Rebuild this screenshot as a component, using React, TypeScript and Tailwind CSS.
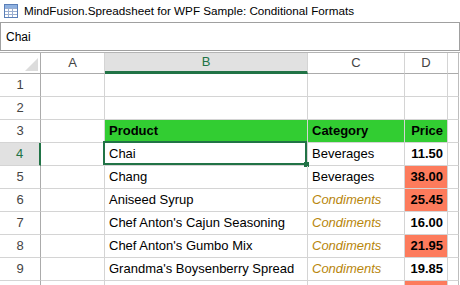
import React from 'react';

type Row = {
  n: number;
  product?: string;
  category?: string;
  price?: string;
  hot?: boolean;
  header?: boolean;
};

const ROWS: Row[] = [
  { n: 1 },
  { n: 2 },
  { n: 3, product: 'Product', category: 'Category', price: 'Price', header: true },
  { n: 4, product: 'Chai', category: 'Beverages', price: '11.50' },
  { n: 5, product: 'Chang', category: 'Beverages', price: '38.00', hot: true },
  { n: 6, product: 'Aniseed Syrup', category: 'Condiments', price: '25.45', hot: true },
  { n: 7, product: "Chef Anton's Cajun Seasoning", category: 'Condiments', price: '16.00' },
  { n: 8, product: "Chef Anton's Gumbo Mix", category: 'Condiments', price: '21.95', hot: true },
  { n: 9, product: "Grandma's Boysenberry Spread", category: 'Condiments', price: '19.85' },
  // row 10 is only a sliver at the bottom edge
  { n: 10, price: '', hot: true },
];

const cellFont = { fontFamily: '"Liberation Sans", Arial, sans-serif' };

function AppIcon() {
  return (
    <svg width="14" height="14" viewBox="0 0 14 14" className="shrink-0">
      <rect x="0.5" y="0.5" width="13" height="13" fill="#ffffff" stroke="#5a7fb8" />
      <rect x="1" y="1" width="12" height="3" fill="#8fb1e0" />
      <path d="M1 4.5H13M1 7.5H13M1 10.5H13M4.5 4V13M8.5 4V13" stroke="#9aaed0" strokeWidth="1" />
    </svg>
  );
}

function HeaderCell({ label, w, active }: { label: string; w: string; active?: boolean }) {
  return (
    <div
      className={[
        'flex items-center justify-center border-r border-[#d4d4d4] text-[13px]',
        w,
        active
          ? 'bg-[#e1e1e1] text-[#217346] border-b-[3px] border-b-[#217346]'
          : 'bg-white text-[#444444] border-b border-b-[#ababab]',
      ].join(' ')}
    >
      {label}
    </div>
  );
}

export default function App() {
  return (
    <div
      className="w-[460px] h-[285px] overflow-hidden bg-white text-black"
      style={{ fontFamily: '"Liberation Sans", Arial, sans-serif' }}
    >
      {/* title bar */}
      <div className="h-[23px] flex items-center gap-[6px] pl-[4px] border-b border-[#a0a0a0] text-[11.7px]">
        <AppIcon />
        <span>MindFusion.Spreadsheet for WPF Sample: Conditional Formats</span>
      </div>

      {/* formula bar */}
      <div className="h-[28px] border-b border-l border-r border-[#a0a0a0] pl-[5px] pt-[5px] text-[12px]">
        Chai
      </div>
      <div className="h-[2px] border-b border-[#b4b4b4]" />

      {/* grid */}
      <div className="w-[459px]">
        <div className="flex h-[21px]">
          <div className="w-[41px] border-r border-b border-[#ababab] flex items-end justify-end pr-[2px] pb-[2px]">
            <div className="w-0 h-0 border-l-[13px] border-l-transparent border-b-[13px] border-b-[#dcdcdc]" />
          </div>
          <HeaderCell label="A" w="w-[64px]" />
          <HeaderCell label="B" w="w-[203px]" active />
          <HeaderCell label="C" w="w-[97px]" />
          <HeaderCell label="D" w="w-[43px]" />
          <div className="w-[11px] border-r border-b border-[#ababab] border-r-[#bdbdbd]" />
        </div>

        {ROWS.map((r) => {
          const sel = r.n === 4;
          const green = r.header ? 'bg-[#32cd32] font-bold' : '';
          return (
            <div key={r.n} className="flex h-[23px]">
              <div
                className={[
                  'w-[41px] flex items-center justify-center border-b border-[#d4d4d4] text-[13px]',
                  sel
                    ? 'bg-[#e1e1e1] text-[#217346] border-r-2 border-r-[#217346]'
                    : 'text-[#444444] border-r border-r-[#ababab]',
                ].join(' ')}
              >
                {r.n < 10 ? r.n : ''}
              </div>
              <div className="w-[64px] border-r border-b border-[#d4d4d4]" />
              <div
                className={[
                  'relative w-[203px] flex items-center pl-[4px] border-r border-b border-[#d4d4d4] text-[13px]',
                  green,
                ].join(' ')}
                style={cellFont}
              >
                {r.product}
                {sel && (
                  <>
                    <div className="absolute -left-[2px] -top-[2px] right-0 bottom-0 border-2 border-[#217346]" />
                    <div className="absolute -right-[2px] -bottom-[2px] w-[5px] h-[5px] bg-[#217346]" />
                  </>
                )}
              </div>
              <div
                className={[
                  'w-[97px] flex items-center pl-[4px] border-r border-b border-[#d4d4d4] text-[13px]',
                  green,
                  r.category === 'Condiments' ? 'italic text-[#b8860b]' : '',
                ].join(' ')}
                style={cellFont}
              >
                {r.category}
              </div>
              <div
                className={[
                  'w-[43px] flex items-center justify-end pr-[4px] border-r border-b border-[#d4d4d4] text-[13px] font-bold',
                  green,
                  r.hot ? 'bg-[#fd7b5c]' : '',
                ].join(' ')}
                style={cellFont}
              >
                {r.price}
              </div>
              <div className="w-[11px] border-r border-b border-[#d4d4d4] border-r-[#bdbdbd]" />
            </div>
          );
        })}
      </div>
    </div>
  );
}
